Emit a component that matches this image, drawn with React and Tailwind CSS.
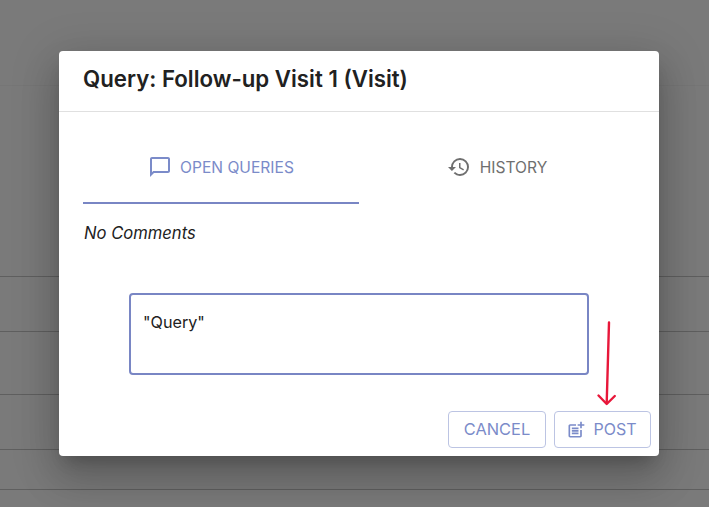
import React from "react";

export default function App() {
  return (
    <div className="relative h-[507px] w-[709px] overflow-hidden bg-[#7a7a7a] font-['Inter','Liberation_Sans',sans-serif]">
      <div className="flex flex-col">
        <div className="h-[86px] border-b border-[#767676]" />
        <div className="h-[191px] border-b border-[#5f5f5f]" />
        <div className="h-[55px] border-b border-[#5f5f5f]" />
        <div className="h-[63px] border-b border-[#5f5f5f]" />
        <div className="h-[55px] border-b border-[#5f5f5f]" />
        <div className="h-[40px] border-b border-[#5f5f5f]" />
      </div>

      <div className="absolute left-[59px] top-[51px] flex h-[405px] w-[600px] flex-col rounded-[4px] bg-white shadow-[0_11px_15px_-7px_rgba(0,0,0,0.2),0_24px_38px_3px_rgba(0,0,0,0.14),0_9px_46px_8px_rgba(0,0,0,0.12)]">
        <div className="flex h-[61px] items-center border-b border-[#e0e0e0] px-6 pb-[4px]">
          <h2 className="text-[22.25px] leading-[30px] font-semibold text-[#212121]">Query: Follow-up Visit 1 (Visit)</h2>
        </div>

        <div className="flex flex-col px-6">
          <div className="mt-[20px] flex">
            <div className="flex h-[72px] w-[276px] items-center justify-center gap-[8px] border-b-2 border-[#7986c4] pb-[1px] text-[15.6px] text-[#7b8bc9]">
              <svg width="24" height="24" viewBox="0 0 24 24" fill="currentColor">
                <path d="M20 2H4c-1.100 0-2 .9-2 2v18l4-4h14c1.100 0 2-.9 2-2V4c0-1.100-.9-2-2-2zm0 14H5.170L4 17.170V4h16v12z" />
              </svg>
              <span className="pt-[2px]">OPEN QUERIES</span>
            </div>
            <div className="flex h-[72px] w-[276px] items-center justify-center gap-[9px] border-b-2 border-transparent pb-[1px] text-[15.6px] text-[#6f6f6f]">
              <svg width="24" height="24" viewBox="0 0 24 24" fill="currentColor">
                <path d="M13 3a9 9 0 0 0-9 9H1l3.890 3.890.07.140L9 12H6c0-3.870 3.130-7 7-7s7 3.130 7 7-3.130 7-7 7c-1.930 0-3.680-.79-4.940-2.060l-1.420 1.420A8.954 8.954 0 0 0 13 21a9 9 0 0 0 0-18zm-1 5v5l4.280 2.540.72-1.210-3.500-2.080V8H12z" />
              </svg>
              <span className="pt-[2px]">HISTORY</span>
            </div>
          </div>

          <p className="mt-[18px] ml-[1px] text-[16.6px] leading-[22px] text-[#212121] italic">No Comments</p>

          <div className="mt-[49px] ml-[46px] h-[82px] w-[460px] rounded-[4px] border-2 border-[#7986c4] px-[12px] py-[15px] text-[16.2px] leading-[24px] text-[#212121]">
            "Query"
          </div>

          <div className="-mr-[16px] mt-[36px] flex justify-end gap-2">
            <button className="flex h-[37px] w-[98px] items-center justify-center rounded-[4px] border border-[#bcc4e3] text-[16.4px] text-[#7b8bc9]">CANCEL</button>
            <button className="flex h-[37px] w-[97px] items-center justify-center gap-[7px] rounded-[4px] border border-[#bcc4e3] pr-[2px] text-[16px] text-[#7b8bc9]">
              <svg width="20" height="20" viewBox="0 0 24 24" fill="currentColor">
                <path d="M17 19.220H5V7h7V5H5c-1.100 0-2 .9-2 2v12c0 1.100.9 2 2 2h12c1.100 0 2-.9 2-2v-7h-2v7.220z" />
                <path d="M19 2h-2v3h-3c.010.010 0 2 0 2h3v2.990c.010.010 2 0 2 0V7h3V5h-3V2zM7 9h8v2H7zM7 12v2h8v-2h-3zM7 15h8v2H7z" />
              </svg>
              <span className="pb-[2px]">POST</span>
            </button>
          </div>
        </div>
      </div>

      <svg className="absolute left-[595px] top-[320px]" width="24" height="88" viewBox="0 0 24 88" fill="none" stroke="#e8173a" strokeWidth="2.4" strokeLinecap="round" strokeLinejoin="round">
        <path d="M14 2.500 L11.700 83" />
        <path d="M3.500 75.500 L11.700 84 L19.800 76" />
      </svg>
    </div>
  );
}
